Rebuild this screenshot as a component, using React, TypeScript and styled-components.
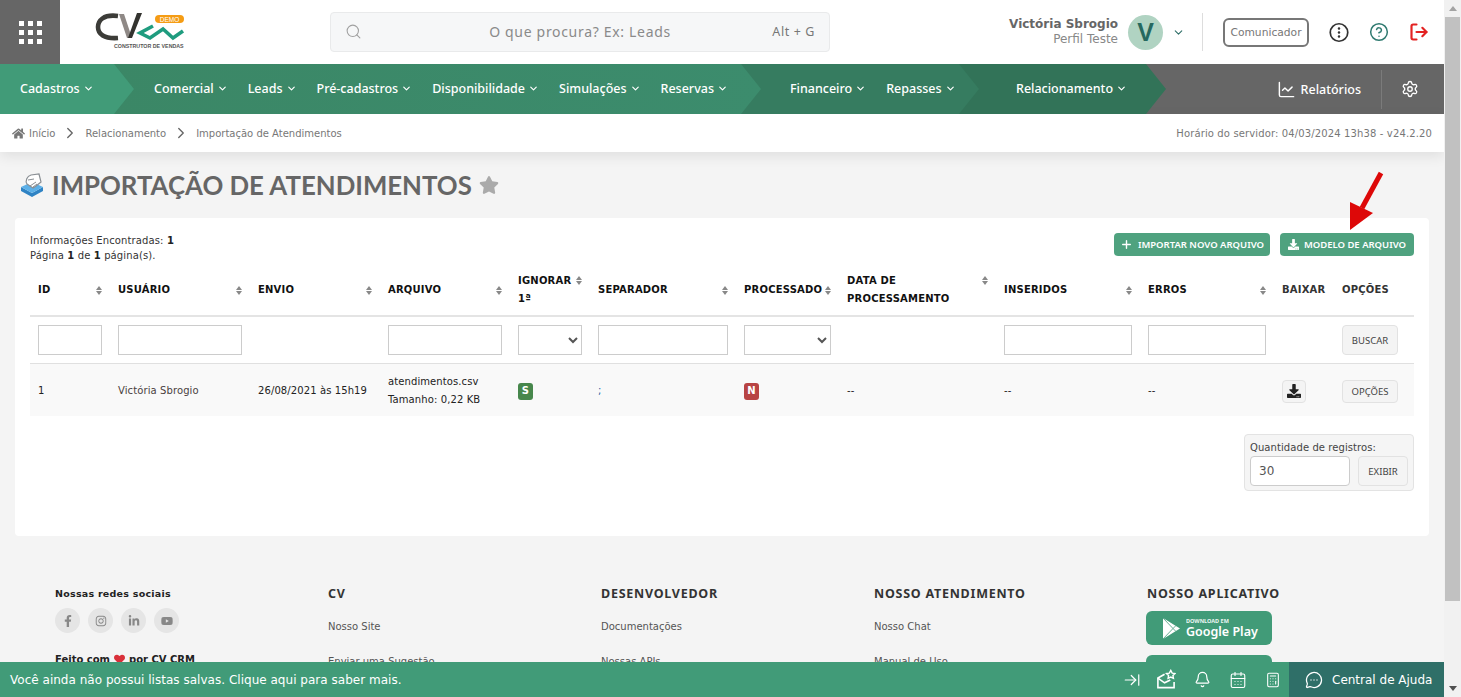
import React from 'react'
import styled, { createGlobalStyle } from 'styled-components'
import {
  ArrowRightToLine,
  Bell,
  Calculator,
  CalendarDays,
  ChartLine,
  ChevronDown,
  ChevronRight,
  CircleHelp,
  LogOut,
  MessageCircleMore,
  Plus,
  Search,
  Settings,
} from 'lucide-react'
import { FaDownload, FaFacebookF, FaHeart, FaHome, FaInstagram, FaLinkedinIn, FaStar, FaYoutube } from 'react-icons/fa'

const GlobalStyle = createGlobalStyle`
  * { box-sizing: border-box; }
  html, body { margin: 0; height: 100%; overflow: hidden; }
  body { font-family: "DejaVu Sans", Verdana, sans-serif; font-size: 10px; color: #333; background: #f4f4f4; }
`

const Shell = styled.div`
  display: flex;
  height: 100vh;
  overflow: hidden;
`

const Main = styled.div`
  position: relative;
  flex: 1;
  min-width: 0;
  overflow: hidden;
`

/* scrollbar */
const ScrollTrack = styled.div`
  display: flex;
  flex-direction: column;
  align-items: center;
  width: 17px;
  flex: none;
  background: #f1f1f1;
`

const ScrollEnd = styled.div<{ $down?: boolean }>`
  display: flex;
  align-items: center;
  justify-content: center;
  width: 17px;
  height: 17px;
  flex: none;
  margin-top: ${(p) => (p.$down ? 'auto' : '0')};
  &::before {
    content: '';
    border-left: 4px solid transparent;
    border-right: 4px solid transparent;
    ${(p) => (p.$down ? 'border-top: 5px solid #505050;' : 'border-bottom: 5px solid #a3a3a3;')}
  }
`

const ScrollThumb = styled.div`
  width: 15px;
  height: 584px;
  background: #c1c1c1;
`

/* top header */
const Topbar = styled.header`
  display: flex;
  align-items: center;
  height: 64px;
  background: #fff;
`

const MenuButton = styled.button`
  display: grid;
  grid-template-columns: repeat(3, 5px);
  grid-auto-rows: 5px;
  gap: 4px;
  align-content: center;
  justify-content: center;
  width: 60px;
  height: 64px;
  padding: 0;
  border: 0;
  background: #666;
`

const MenuDot = styled.span`
  background: #fff;
`

const LogoWrap = styled.div`
  width: 270px;
  padding-left: 30px;
  display: flex;
`

const SearchBox = styled.div`
  display: grid;
  grid-template-columns: 1fr auto 1fr;
  align-items: center;
  width: 500px;
  height: 40px;
  padding: 0 14px 2px 14px;
  background: #f6f7f8;
  border: 1px solid #e9eaeb;
  border-radius: 4px;
  color: #a0a0a0;
`

const SearchText = styled.span`
  font-family: "Noto Sans", sans-serif;
  font-size: 14px;
  letter-spacing: 0.68px;
  color: #8a8a8a;
`

const SearchHint = styled.span`
  justify-self: end;
  font-family: "Noto Sans", sans-serif;
  font-size: 12.5px;
  letter-spacing: 0.6px;
  color: #777;
`

const UserArea = styled.div`
  display: flex;
  align-items: center;
  margin-left: auto;
  padding-right: 15px;
`

const UserText = styled.div`
  text-align: right;
  line-height: 15px;
  margin-right: 10px;
`

const UserName = styled.div`
  font-size: 12px;
  font-weight: 700;
  color: #666;
`

const UserRole = styled.div`
  font-size: 12px;
  color: #888;
`

const Avatar = styled.div`
  display: flex;
  align-items: center;
  justify-content: center;
  width: 35px;
  height: 35px;
  border-radius: 50%;
  background: #b0d3c2;
  color: #26695f;
  font-family: "Liberation Sans", sans-serif;
  font-size: 25px;
  font-weight: 700;
`

const UserChevron = styled.span`
  display: flex;
  width: 39px;
  padding-left: 9px;
  color: #2f6f68;
`

const VDivider = styled.div`
  width: 1px;
  height: 38px;
  background: #ddd;
  margin-right: 20px;
`

const CommButton = styled.button`
  width: 86px;
  height: 29px;
  padding: 0;
  border: 2px solid #777;
  border-radius: 6px;
  background: #fff;
  color: #777;
  font-family: "DejaVu Sans", sans-serif;
  font-size: 10.7px;
  font-weight: 500;
  margin-right: 20px;
`

const HeadIcon = styled.span<{ $color: string }>`
  display: flex;
  justify-content: center;
  width: 20px;
  margin-right: 20px;
  color: ${(p) => p.$color};
  &:last-child { margin-right: 0; }
`

/* nav */
const Nav = styled.nav`
  display: flex;
  height: 50px;
  background: #666;
`

const Segment = styled.div<{ $w: number; $pad: number; $bg: string; $z: number }>`
  position: relative;
  z-index: ${(p) => p.$z};
  display: flex;
  align-items: center;
  gap: 20px;
  flex: none;
  width: ${(p) => p.$w}px;
  margin-left: -20px;
  padding-left: ${(p) => p.$pad}px;
  padding-bottom: 2px;
  background: ${(p) => p.$bg};
  clip-path: polygon(0 0, calc(100% - 20px) 0, 100% 50%, calc(100% - 20px) 100%, 0 100%);
  &:first-child { margin-left: 0; }
`

const NavItem = styled.a`
  display: flex;
  align-items: center;
  gap: 3px;
  color: #fff;
  font-family: "Noto Sans", sans-serif;
  font-size: 12.5px;
  font-weight: 500;
  white-space: nowrap;
`

const ReportLink = styled(NavItem)`
  gap: 5px;
`

const NavRight = styled.div`
  display: flex;
  align-items: center;
  margin-left: auto;
  padding-right: 25px;
  color: #fff;
`

const NavDivider = styled.div`
  width: 1px;
  height: 39px;
  margin: 0 19px 0 20px;
  background: #7b7b7b;
`

/* breadcrumb */
const Crumbs = styled.div`
  position: relative;
  display: flex;
  align-items: center;
  height: 38px;
  padding: 0 12px;
  background: #fff;
  box-shadow: 0 4px 14px rgba(0, 0, 0, 0.09);
  color: #777;
  font-size: 10px;
`

const CrumbLink = styled.span`
  display: flex;
  align-items: center;
  gap: 4px;
`

const CrumbSep = styled.span`
  display: flex;
  margin: 0 6px;
  color: #666;
`

const ServerTime = styled.span`
  margin-left: auto;
  font-size: 10px;
  letter-spacing: 0.13px;
`

/* page body */
const PageTitle = styled.div`
  display: flex;
  align-items: center;
  height: 32px;
  margin: 17px 0 17px 20px;
`

const TitleText = styled.h1`
  margin: 0 7px 0 8px;
  font-family: Lato, sans-serif;
  font-size: 25.8px;
  font-weight: 700;
  color: #666;
  white-space: nowrap;
`

const Card = styled.section`
  position: relative;
  margin: 0 15px;
  padding: 15px 15px 45px;
  background: #fff;
  border-radius: 4px;
`

const PointerArrow = styled.svg`
  position: absolute;
  left: 1330px;
  top: -48px;
`

const Toolbar = styled.div`
  display: flex;
  justify-content: space-between;
  height: 35px;
`

const Info = styled.div`
  line-height: 15px;
  font-size: 10px;
  letter-spacing: 0.12px;
  color: #333;
  b { color: #222; }
`

const ToolButtons = styled.div`
  display: flex;
  gap: 10px;
  height: 23px;
`

const GreenButton = styled.button<{ $w: number }>`
  display: flex;
  align-items: center;
  justify-content: center;
  gap: 5px;
  width: ${(p) => p.$w}px;
  height: 23px;
  padding: 0;
  border: 0;
  border-radius: 4px;
  background: #4fa27f;
  color: #fff;
  font-family: "Noto Sans", sans-serif;
  font-size: 9.5px;
  font-weight: 600;
  white-space: nowrap;
`

const Table = styled.table`
  width: 1384px;
  table-layout: fixed;
  border-collapse: separate;
  border-spacing: 0;
`

const HeadCell = styled.th`
  height: 49px;
  padding: 0 8px 3px;
  border-bottom: 2px solid #e4e4e4;
  text-align: left;
  font-size: 10px;
  font-weight: 700;
  line-height: 18px;
  letter-spacing: 0.2px;
  color: #111;
`

const HeadInner = styled.div<{ $top?: boolean }>`
  display: flex;
  justify-content: space-between;
  align-items: ${(p) => (p.$top ? 'flex-start' : 'center')};
`

const MutedHead = styled.span`
  color: #333;
`

const Sort = styled.span`
  display: flex;
  flex-direction: column;
  gap: 1px;
  flex: none;
  margin: 4px 0;
  &::before, &::after {
    content: '';
    border-left: 3.5px solid transparent;
    border-right: 3.5px solid transparent;
  }
  &::before { border-bottom: 4px solid #888; }
  &::after { border-top: 4px solid #888; }
`

const FilterCell = styled.td`
  height: 47px;
  padding: 0 8px;
  border-bottom: 1px solid #e0e0e0;
  vertical-align: middle;
`

const FilterInput = styled.input`
  display: block;
  width: 100%;
  height: 30px;
  border: 1px solid #ccc;
  background: #fff;
  border-radius: 0;
`

const FilterSelect = styled.select`
  display: block;
  width: 100%;
  height: 30px;
  border: 1px solid #ccc;
  background: #fff;
  border-radius: 0;
  color: #555;
`

const GreyButton = styled.button<{ $w?: number; $h?: number }>`
  display: flex;
  align-items: center;
  justify-content: center;
  width: ${(p) => p.$w ?? 56}px;
  height: ${(p) => p.$h ?? 30}px;
  padding: 0;
  border: 1px solid #e2e2e2;
  border-radius: 4px;
  background: #f4f4f4;
  color: #444;
  font-family: "Noto Sans", sans-serif;
  font-size: 9.5px;
`

const DataRow = styled.tr`
  background: #f9f9f9;
`

const DataCell = styled.td<{ $color?: string }>`
  height: 52px;
  padding: 2px 8px 0;
  font-size: 10px;
  letter-spacing: 0.1px;
  line-height: 18px;
  color: ${(p) => p.$color ?? '#222'};
`

const Badge = styled.span<{ $bg: string }>`
  display: inline-flex;
  align-items: center;
  justify-content: center;
  min-width: 15px;
  height: 17px;
  padding: 0 3px;
  border-radius: 3px;
  background: ${(p) => p.$bg};
  color: #fff;
  font-size: 10px;
  font-weight: 700;
`

const PagerRow = styled.div`
  display: flex;
  justify-content: flex-end;
  margin-top: 18px;
`

const PagerBox = styled.div`
  width: 170px;
  height: 57px;
  padding: 6px 5px;
  background: #f5f5f5;
  border: 1px solid #e3e3e3;
  border-radius: 4px;
`

const PagerLabel = styled.div`
  font-size: 10px;
  letter-spacing: 0.08px;
  line-height: 14px;
  color: #444;
  margin-bottom: 1px;
`

const PagerControls = styled.div`
  display: flex;
  justify-content: space-between;
`

const PagerInput = styled.input`
  width: 100px;
  height: 30px;
  padding: 0 8px;
  border: 1px solid #ccc;
  border-radius: 4px;
  background: #fff;
  color: #555;
  font-family: "DejaVu Sans", sans-serif;
  font-size: 12px;
`

/* footer */
const Footer = styled.footer`
  display: grid;
  grid-template-columns: repeat(5, 273px);
  padding: 50px 0 0 55px;
`

const FooterCol = styled.div`
  display: flex;
  flex-direction: column;
  align-items: flex-start;
`

const FooterTitle = styled.h4`
  margin: 0 0 17px;
  font-family: "Noto Sans", sans-serif;
  font-size: 12.5px;
  line-height: 16px;
  font-weight: 700;
  letter-spacing: 0.75px;
  color: #333;
`

const AppTitle = styled(FooterTitle)`
  margin-bottom: 9px;
`

const FooterLink = styled.a`
  height: 35px;
  line-height: 16px;
  font-size: 10px;
  color: #555;
`

const SocialTitle = styled.div`
  font-size: 9.5px;
  font-weight: 700;
  line-height: 16px;
  letter-spacing: 0.25px;
  color: #222;
  margin-bottom: 6px;
`

const SocialRow = styled.div`
  display: flex;
  gap: 8px;
  margin-bottom: 21px;
`

const SocialIcon = styled.span`
  display: flex;
  align-items: center;
  justify-content: center;
  width: 25px;
  height: 25px;
  border-radius: 50%;
  background: #e5e5e5;
  color: #888;
  font-size: 12px;
`

const MadeWith = styled.div`
  display: flex;
  align-items: center;
  gap: 4px;
  font-size: 10px;
  font-weight: 700;
  color: #222;
`

const Heart = styled(FaHeart)`
  color: #d9303a;
  font-size: 11px;
`

const StoreButton = styled.a`
  display: flex;
  align-items: center;
  gap: 5px;
  width: 126px;
  height: 34px;
  margin: 0 0 10px -1px;
  padding-left: 16px;
  border-radius: 6px;
  background: #419b78;
  color: #fff;
`

const StoreText = styled.span`
  display: flex;
  flex-direction: column;
  font-family: "Noto Sans", sans-serif;
  line-height: 13px;
`

const StoreSmall = styled.span`
  font-size: 5.5px;
  line-height: 7px;
  font-weight: 700;
  opacity: 0.9;
`

const StoreBig = styled.span`
  font-size: 12.5px;
  font-weight: 600;
`

/* bottom bar */
const BottomBar = styled.div`
  position: absolute;
  left: 0;
  right: 0;
  bottom: 0;
  display: flex;
  align-items: center;
  height: 35px;
  padding-left: 10px;
  background: #419b78;
  color: #fff;
`

const BarText = styled.span`
  font-size: 12px;
  white-space: nowrap;
  letter-spacing: 0.02px;
`

const BarIcons = styled.div`
  display: flex;
  align-items: center;
  gap: 18px;
  margin-left: auto;
  margin-right: 8px;
`

const CollapseIcon = styled(ArrowRightToLine)`
  margin-right: -3px;
`

const HelpPanel = styled.div`
  display: flex;
  align-items: center;
  gap: 9px;
  width: 155px;
  height: 35px;
  padding-left: 16px;
  background: #2f6f68;
  font-size: 12px;
  white-space: nowrap;
`

const Logo = () => (
  <svg width="100" height="45" viewBox="0 0 100 45">
    <path d="M28 6C13 4 8 11 8 17c0 7 6 12 20 11" fill="none" stroke="#3c3c38" strokeWidth="4.6" />
    <path d="M29 4l5 0 8 24h-5z" fill="#8f8986" />
    <path d="M52 3h-5L38 28h4z" fill="#33332f" />
    <path d="M63 16L50 23l10 5 13-9 10 9 10-7" fill="none" stroke="#1f9c7f" strokeWidth="3.6" />
    <rect x="65" y="5" width="29" height="8" rx="4" fill="#f59c14" />
    <text x="79.5" y="11.5" textAnchor="middle" fontFamily="Liberation Sans, sans-serif" fontSize="6.5" fill="#fff">DEMO</text>
    <text x="24" y="38" fontFamily="Liberation Sans, sans-serif" fontSize="5.3" fontWeight="700" fill="#555">CONSTRUTOR DE VENDAS</text>
  </svg>
)

const TitleIcon = () => (
  <svg width="24" height="24" viewBox="0 0 24 24">
    <path d="M1 14l11 6 11-6v4l-11 6-11-6z" fill="#2f83c4" />
    <path d="M1 14l11-5 11 5-11 6z" fill="#5cb0e8" />
    <path d="M7 11c-2-3 0-8 4-9l8-1 2 8-5 4-3 2z" fill="#fff" stroke="#8a8f94" strokeWidth="1.2" />
    <path d="M8 7l6-1M10 13l6-4M13 14l4-3" stroke="#8a8f94" strokeWidth="1" fill="none" />
  </svg>
)

const DotsIcon = () => (
  <svg width="21" height="21" viewBox="0 0 21 21" fill="none">
    <circle cx="10.5" cy="10.5" r="9.2" stroke="currentColor" strokeWidth="1.8" />
    <circle cx="10.5" cy="6.3" r="1.3" fill="currentColor" />
    <circle cx="10.5" cy="10.5" r="1.3" fill="currentColor" />
    <circle cx="10.5" cy="14.7" r="1.3" fill="currentColor" />
  </svg>
)

const ListStarIcon = () => (
  <svg width="20" height="21" viewBox="0 0 21 21" fill="none" stroke="#fff" strokeWidth="1.7">
    <path d="M9 5L2 9v10h17v-6" />
    <path d="M2 9l7 5 6-3" />
    <path d="M15.5 1l1.5 2.8 3 .4-2.2 2.1.5 3-2.8-1.4-2.8 1.4.5-3-2.2-2.1 3-.4z" fill="none" strokeWidth="1.5" />
  </svg>
)

const PlayIcon = () => (
  <svg width="19" height="21" viewBox="0 0 19 21">
    <path d="M1 0l17 10.5L1 21z" fill="#fff" />
    <path d="M1 0l10 10.5L1 21M11 10.5l3-3M11 10.5l3 3" fill="none" stroke="#419b78" strokeWidth="0.8" />
  </svg>
)

const navGroups = [
  { w: 134, pad: 20, bg: '#419b78', items: ['Cadastros'] },
  { w: 647, pad: 40, bg: 'linear-gradient(90deg, #3b8766, #3c8c6d)', items: ['Comercial', 'Leads', 'Pré-cadastros', 'Disponibilidade', 'Simulações', 'Reservas'] },
  { w: 238, pad: 49, bg: '#367c60', items: ['Financeiro', 'Repasses'] },
  { w: 207, pad: 57, bg: '#327358', items: ['Relacionamento'] },
]

const columns = [
  { w: 80, label: 'ID' },
  { w: 140, label: 'USUÁRIO' },
  { w: 130, label: 'ENVIO' },
  { w: 130, label: 'ARQUIVO' },
  { w: 80, label: 'IGNORAR 1ª', top: true },
  { w: 146, label: 'SEPARADOR' },
  { w: 103, label: 'PROCESSADO' },
  { w: 157, label: 'DATA DE PROCESSAMENTO', top: true },
  { w: 144, label: 'INSERIDOS' },
  { w: 134, label: 'ERROS' },
  { w: 60, label: 'BAIXAR', plain: true },
  { w: 80, label: 'OPÇÕES', plain: true },
]

const Col = styled.col<{ $w: number }>`
  width: ${(p) => p.$w}px;
`

export default function App() {
  return (
    <>
      <GlobalStyle />
      <Shell>
        <Main>
          {/* header */}
          <Topbar>
            <MenuButton aria-label="Menu">
              {Array.from({ length: 9 }).map((_, i) => (
                <MenuDot key={i} />
              ))}
            </MenuButton>
            <LogoWrap>
              <Logo />
            </LogoWrap>
            <SearchBox>
              <Search size={17} strokeWidth={1.5} />
              <SearchText>O que procura? Ex: Leads</SearchText>
              <SearchHint>Alt + G</SearchHint>
            </SearchBox>
            <UserArea>
              <UserText>
                <UserName>Victória Sbrogio</UserName>
                <UserRole>Perfil Teste</UserRole>
              </UserText>
              <Avatar>V</Avatar>
              <UserChevron>
                <ChevronDown size={13} />
              </UserChevron>
              <VDivider />
              <CommButton>Comunicador</CommButton>
              <HeadIcon $color="#333">
                <DotsIcon />
              </HeadIcon>
              <HeadIcon $color="#2f7a70">
                <CircleHelp size={22} strokeWidth={1.8} />
              </HeadIcon>
              <HeadIcon $color="#e32222">
                <LogOut size={24} strokeWidth={2.6} />
              </HeadIcon>
            </UserArea>
          </Topbar>

          {/* nav */}
          <Nav>
            {navGroups.map((g, i) => (
              <Segment key={g.items[0]} $w={g.w} $pad={g.pad} $bg={g.bg} $z={navGroups.length - i}>
                {g.items.map((item) => (
                  <NavItem key={item}>
                    {item}
                    <ChevronDown size={11} strokeWidth={2.6} />
                  </NavItem>
                ))}
              </Segment>
            ))}
            <NavRight>
              <ReportLink>
                <ChartLine size={19} strokeWidth={1.8} />
                Relatórios
              </ReportLink>
              <NavDivider />
              <Settings size={18} strokeWidth={1.8} />
            </NavRight>
          </Nav>

          {/* breadcrumb */}
          <Crumbs>
            <CrumbLink>
              <FaHome size={13} />
              Início
            </CrumbLink>
            <CrumbSep>
              <ChevronRight size={18} strokeWidth={1.8} />
            </CrumbSep>
            <CrumbLink>Relacionamento</CrumbLink>
            <CrumbSep>
              <ChevronRight size={18} strokeWidth={1.8} />
            </CrumbSep>
            <CrumbLink>Importação de Atendimentos</CrumbLink>
            <ServerTime>Horário do servidor: 04/03/2024 13h38 - v24.2.20</ServerTime>
          </Crumbs>

          <PageTitle>
            <TitleIcon />
            <TitleText>IMPORTAÇÃO DE ATENDIMENTOS</TitleText>
            <FaStar size={20} color="#aaa" />
          </PageTitle>

          <Card>
            <PointerArrow width="40" height="70" viewBox="0 0 40 70">
              <path d="M36 3L17 38" stroke="#dd0808" strokeWidth="5" fill="none" />
              <path d="M5 60L5 32L28 43z" fill="#dd0808" />
            </PointerArrow>

            <Toolbar>
              <Info>
                Informações Encontradas: <b>1</b>
                <br />
                Página <b>1</b> de <b>1</b> página(s).
              </Info>
              <ToolButtons>
                <GreenButton $w={156}>
                  <Plus size={13} strokeWidth={2.6} />
                  IMPORTAR NOVO ARQUIVO
                </GreenButton>
                <GreenButton $w={134}>
                  <FaDownload size={11} />
                  MODELO DE ARQUIVO
                </GreenButton>
              </ToolButtons>
            </Toolbar>

            <Table>
              <colgroup>
                {columns.map((c) => (
                  <Col key={c.label} $w={c.w} />
                ))}
              </colgroup>
              <thead>
                <tr>
                  {columns.map((c) => (
                    <HeadCell key={c.label}>
                      {c.plain ? (
                        <MutedHead>{c.label}</MutedHead>
                      ) : (
                        <HeadInner $top={c.top}>
                          <span>{c.label}</span>
                          <Sort />
                        </HeadInner>
                      )}
                    </HeadCell>
                  ))}
                </tr>
              </thead>
              <tbody>
                <tr>
                  <FilterCell><FilterInput /></FilterCell>
                  <FilterCell><FilterInput /></FilterCell>
                  <FilterCell />
                  <FilterCell><FilterInput /></FilterCell>
                  <FilterCell><FilterSelect /></FilterCell>
                  <FilterCell><FilterInput /></FilterCell>
                  <FilterCell><FilterSelect /></FilterCell>
                  <FilterCell />
                  <FilterCell><FilterInput /></FilterCell>
                  <FilterCell><FilterInput /></FilterCell>
                  <FilterCell />
                  <FilterCell><GreyButton>BUSCAR</GreyButton></FilterCell>
                </tr>
                <DataRow>
                  <DataCell>1</DataCell>
                  <DataCell $color="#4a3f3f">Victória Sbrogio</DataCell>
                  <DataCell>26/08/2021 às 15h19</DataCell>
                  <DataCell>
                    atendimentos.csv
                    <br />
                    Tamanho: 0,22 KB
                  </DataCell>
                  <DataCell><Badge $bg="#47874c">S</Badge></DataCell>
                  <DataCell $color="#2b5f9e">;</DataCell>
                  <DataCell><Badge $bg="#b84444">N</Badge></DataCell>
                  <DataCell>--</DataCell>
                  <DataCell>--</DataCell>
                  <DataCell>--</DataCell>
                  <DataCell>
                    <GreyButton $w={24} $h={23}>
                      <FaDownload size={14} color="#222" />
                    </GreyButton>
                  </DataCell>
                  <DataCell>
                    <GreyButton $h={23}>OPÇÕES</GreyButton>
                  </DataCell>
                </DataRow>
              </tbody>
            </Table>

            <PagerRow>
              <PagerBox>
                <PagerLabel>Quantidade de registros:</PagerLabel>
                <PagerControls>
                  <PagerInput defaultValue="30" />
                  <GreyButton $w={50}>EXIBIR</GreyButton>
                </PagerControls>
              </PagerBox>
            </PagerRow>
          </Card>

          {/* footer */}
          <Footer>
            <FooterCol>
              <SocialTitle>Nossas redes sociais</SocialTitle>
              <SocialRow>
                <SocialIcon><FaFacebookF /></SocialIcon>
                <SocialIcon><FaInstagram /></SocialIcon>
                <SocialIcon><FaLinkedinIn /></SocialIcon>
                <SocialIcon><FaYoutube /></SocialIcon>
              </SocialRow>
              <MadeWith>Feito com <Heart /> por CV CRM</MadeWith>
            </FooterCol>
            <FooterCol>
              <FooterTitle>CV</FooterTitle>
              <FooterLink>Nosso Site</FooterLink>
              <FooterLink>Enviar uma Sugestão</FooterLink>
            </FooterCol>
            <FooterCol>
              <FooterTitle>DESENVOLVEDOR</FooterTitle>
              <FooterLink>Documentações</FooterLink>
              <FooterLink>Nossas APIs</FooterLink>
            </FooterCol>
            <FooterCol>
              <FooterTitle>NOSSO ATENDIMENTO</FooterTitle>
              <FooterLink>Nosso Chat</FooterLink>
              <FooterLink>Manual de Uso</FooterLink>
            </FooterCol>
            <FooterCol>
              <AppTitle>NOSSO APLICATIVO</AppTitle>
              <StoreButton>
                <PlayIcon />
                <StoreText>
                  <StoreSmall>DOWNLOAD EM</StoreSmall>
                  <StoreBig>Google Play</StoreBig>
                </StoreText>
              </StoreButton>
              <StoreButton>
                <StoreText>
                  <StoreSmall>DOWNLOAD NA</StoreSmall>
                  <StoreBig>App Store</StoreBig>
                </StoreText>
              </StoreButton>
            </FooterCol>
          </Footer>

          <BottomBar>
            <BarText>Você ainda não possui listas salvas. Clique aqui para saber mais.</BarText>
            <BarIcons>
              <CollapseIcon size={18} strokeWidth={1.6} />
              <ListStarIcon />
              <Bell size={17} strokeWidth={1.7} />
              <CalendarDays size={18} strokeWidth={1.5} />
              <Calculator size={16} strokeWidth={1.6} />
            </BarIcons>
            <HelpPanel>
              <MessageCircleMore size={18} strokeWidth={1.7} />
              Central de Ajuda
            </HelpPanel>
          </BottomBar>
        </Main>

        <ScrollTrack>
          <ScrollEnd />
          <ScrollThumb />
          <ScrollEnd $down />
        </ScrollTrack>
      </Shell>
    </>
  )
}
